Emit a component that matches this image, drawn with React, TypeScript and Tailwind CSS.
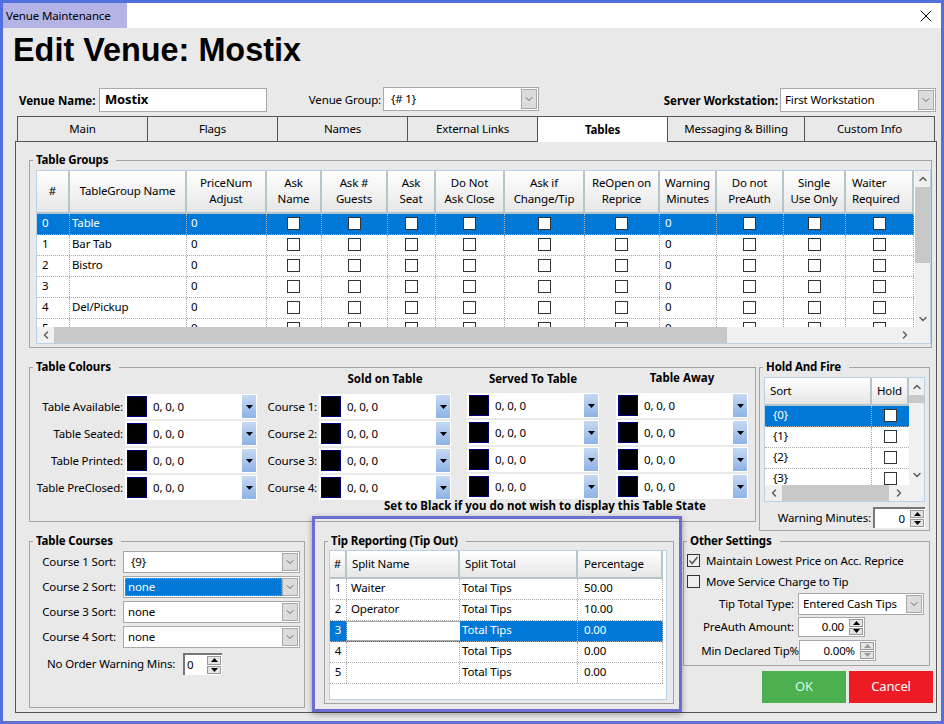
import type { ReactNode } from "react";
import { ChevronDown, ChevronLeft, ChevronRight, ChevronUp, X } from "lucide-react";

const groupCols = "grid grid-cols-[33px_117px_80px_55px_66px_48px_69px_80px_75px_57px_67px_62px_68px]";
const tipCols = "grid grid-cols-[17px_113px_118px_85px]";
const holdCols = "grid grid-cols-[107px_37px]";
const headCell = "flex items-center bg-gradient-to-b from-white to-[#e6e6e6] border-r-2 border-b-2 border-[#b4c6ca]";
const rowBase = "h-[21px] border-b border-dotted border-[#aaa] [&>div]:pb-[2px]";

const groupHeaders = [
    ["#"], ["TableGroup Name"], ["PriceNum", "Adjust"], ["Ask", "Name"], ["Ask #", "Guests"], ["Ask", "Seat"],
    ["Do Not", "Ask Close"], ["Ask if", "Change/Tip"], ["ReOpen on", "Reprice"], ["Warning", "Minutes"],
    ["Do not", "PreAuth"], ["Single", "Use Only"], ["Waiter", "Required"],
];
const groupNames = ["Table", "Bar Tab", "Bistro", "", "Del/Pickup", ""];
const tabs = [
    { name: "Main", width: "w-[130px]" },
    { name: "Flags", width: "w-[130px]" },
    { name: "Names", width: "w-[130px]" },
    { name: "External Links", width: "w-[130px]" },
    { name: "Tables", width: "w-[130px]", active: true },
    { name: "Messaging & Billing", width: "w-[137px]" },
    { name: "Custom Info", width: "w-[131px]" },
];
const tipRows = [
    { name: "Waiter", pct: "50.00" },
    { name: "Operator", pct: "10.00" },
    { name: "", pct: "0.00", selected: true },
    { name: "", pct: "0.00" },
    { name: "", pct: "0.00" },
];

function Group({ title, className, children }: { title: string; className: string; children: ReactNode }) {
    return (
        <fieldset className={`border border-[#a4a4a4] min-w-0 shrink-0 ${className}`}>
            <legend className="ml-[3px] pl-[3px] pr-[8px] font-bold leading-[16px]">{title}</legend>
            {children}
        </fieldset>
    );
}

function Check({ checked, muted }: { checked?: boolean; muted?: boolean }) {
    return (
        <span className={`w-[13px] h-[13px] shrink-0 border border-[#333] flex items-center justify-center ${muted ? "bg-[#eeeeee]" : "bg-white"}`}>
            {checked && (
                <svg width="11" height="11" viewBox="0 0 11 11">
                    <path d="M1.5 5.5 L4.2 8.5 L9.5 2" fill="none" stroke="#555" strokeWidth="1.5" />
                </svg>
            )}
        </span>
    );
}

function Select({ value, className, selected, indent }: { value: string; className: string; selected?: boolean; indent?: boolean }) {
    return (
        <div className={`flex items-center bg-white border border-[#a8a8a8] p-[1px] shrink-0 ${className}`}>
            <span className={`flex-1 h-full flex items-center min-w-0 whitespace-nowrap ${indent ? "pl-[6px]" : "pl-[3px]"} ${selected ? "bg-[#0078d7] text-white outline-1 outline-dotted outline-[#d98b2b] -outline-offset-1" : ""}`}>
                {value}
            </span>
            <span className="w-[16px] h-full bg-[#dcdcdc] border border-[#a8a8a8] flex items-center justify-center">
                <ChevronDown size={12} strokeWidth={1.4} color="#333" />
            </span>
        </div>
    );
}

function Triangle({ up, color = "#000" }: { up?: boolean; color?: string }) {
    return (
        <svg width="7" height="4" viewBox="0 0 7 4">
            <polygon points={up ? "3.5,0 7,4 0,4" : "0,0 7,0 3.5,4"} fill={color} />
        </svg>
    );
}

function Spinner({ value, className, disabled, sunken, left }: { value: string; className: string; disabled?: boolean; sunken?: boolean; left?: boolean }) {
    const border = sunken ? "border-2 border-r-0 border-b-0 border-[#777]" : "border border-[#a8a8a8]";
    const arrow = disabled ? "#999" : "#000";
    return (
        <div className={`flex bg-white shrink-0 ${border} ${className}`}>
            <span className={`flex-1 flex items-center ${left ? "justify-start pl-[2px]" : "justify-end pr-[4px]"}`}>{value}</span>
            <span className="w-[16px] flex flex-col gap-[1px] p-[1px]">
                <span className="flex-1 bg-[#e4e4e4] border border-[#999] flex items-center justify-center"><Triangle up color={arrow} /></span>
                <span className="flex-1 bg-[#e4e4e4] border border-[#999] flex items-center justify-center"><Triangle color={arrow} /></span>
            </span>
        </div>
    );
}

function ColourPicker() {
    return (
        <div className="flex items-center w-[132px] h-[25px] bg-white pl-[2px] pr-[1px] shrink-0">
            <span className="w-[20px] h-[21px] bg-black border border-[#000080]" />
            <span className="ml-[6px] flex-1">0, 0, 0</span>
            <span className="w-[14px] h-[23px] bg-gradient-to-b from-[#c6d9f1] to-[#8db2e6] flex flex-col items-center justify-center">
                <Triangle />
            </span>
        </div>
    );
}

function ColourColumn({ title, titleClass, labels, className }: { title?: string; titleClass?: string; labels: string[]; className: string }) {
    return (
        <div className={`flex flex-col shrink-0 ${className}`}>
            {title && <div className={`self-end w-[132px] font-bold tracking-normal text-center leading-[16px] whitespace-nowrap ${titleClass}`}>{title}</div>}
            <div className="flex flex-col gap-[2px]">
                {labels.map((label, i) => (
                    <div className="flex items-center justify-end gap-[2px]" key={i}>
                        {label && <span className="whitespace-nowrap">{label}</span>}
                        <ColourPicker />
                    </div>
                ))}
            </div>
        </div>
    );
}

function Scroll({ vertical, children }: { vertical?: boolean; children: ReactNode }) {
    return <div className={`bg-[#f0f0f0] flex shrink-0 ${vertical ? "flex-col w-[15px]" : "h-[16px]"}`}>{children}</div>;
}

function Arrow({ children, className }: { children: ReactNode; className: string }) {
    return <span className={`flex items-center justify-center shrink-0 ${className}`}>{children}</span>;
}

const arrowProps = { size: 12, strokeWidth: 3, color: "#606060" };

function TableGroups() {
    return (
        <div className="ml-[6px] mt-[2px] w-[895px] h-[174px] border border-[#b9d1e6] bg-white flex flex-col">
            <div className="flex h-[156px]">
                <div className="w-[877px] overflow-hidden">
                    <div className={`${groupCols} h-[43px]`}>
                        {groupHeaders.map((lines, i) => (
                            <div className={`${headCell} leading-[16px] pb-[2px] flex-col justify-center ${i === 12 ? "items-start pl-[6px]" : ""}`} key={lines[0]}>
                                {lines.map(line => <span className="whitespace-nowrap" key={line}>{line}</span>)}
                            </div>
                        ))}
                    </div>
                    {groupNames.map((name, row) => (
                        <div className={`${groupCols} ${rowBase} ${row === 0 ? "bg-[#0078d7] text-white" : ""}`} key={row}>
                            <div className="pl-[5px] flex items-center border-r border-dotted border-[#aaa]">{row}</div>
                            <div className="pl-[2px] flex items-center border-r border-dotted border-[#aaa]">{name}</div>
                            <div className="pl-[4px] flex items-center border-r border-dotted border-[#aaa]">0</div>
                            {groupHeaders.slice(3).map((lines, col) => (
                                lines[0] === "Warning"
                                    ? <div className="pl-[5px] flex items-center border-r border-dotted border-[#aaa]" key={col}>0</div>
                                    : <div className="pr-[1px] flex items-center justify-center border-r border-dotted border-[#aaa]" key={col}><Check /></div>
                            ))}
                        </div>
                    ))}
                </div>
                <div className="w-[1px]" />
                <Scroll vertical>
                    <Arrow className="h-[16px]"><ChevronUp {...arrowProps} /></Arrow>
                    <div className="h-[76px] bg-[#c8c8c8]" />
                    <div className="flex-1" />
                    <Arrow className="h-[16px]"><ChevronDown {...arrowProps} /></Arrow>
                </Scroll>
            </div>
            <Scroll>
                <Arrow className="w-[17px]"><ChevronLeft {...arrowProps} /></Arrow>
                <div className="w-[673px] bg-[#c8c8c8]" />
                <div className="w-[186px] flex justify-end">
                    <Arrow className="w-[16px]"><ChevronRight {...arrowProps} /></Arrow>
                </div>
            </Scroll>
        </div>
    );
}

function HoldAndFire() {
    return (
        <div className="ml-[4px] mt-[2px] w-[161px] h-[125px] border border-[#b9d1e6] bg-white flex">
            <div className="w-[144px] flex flex-col">
                <div className="h-[108px] overflow-hidden">
                    <div className={`${holdCols} h-[28px]`}>
                        <div className={`${headCell} pl-[5px]`}>Sort</div>
                        <div className={`${headCell} pl-[5px]`}>Hold</div>
                    </div>
                    {["{0}", "{1}", "{2}", "{3}", "{4}"].map((sort, i) => (
                        <div className={`${holdCols} ${rowBase} ${i === 0 ? "bg-[#0078d7] text-white" : ""}`} key={sort}>
                            <div className="pl-[8px] flex items-center border-r border-dotted border-[#aaa]">{sort}</div>
                            <div className="flex items-center justify-center"><Check /></div>
                        </div>
                    ))}
                </div>
                <Scroll>
                    <Arrow className="w-[17px]"><ChevronLeft {...arrowProps} /></Arrow>
                    <div className="w-[107px] bg-[#c8c8c8]" />
                    <Arrow className="w-[20px]"><ChevronRight {...arrowProps} /></Arrow>
                </Scroll>
            </div>
            <div className="w-[1px]" />
            <Scroll vertical>
                <Arrow className="h-[17px]"><ChevronUp {...arrowProps} /></Arrow>
                <div className="h-[8px] bg-[#c8c8c8]" />
                <div className="flex-1" />
                <Arrow className="h-[16px]"><ChevronDown {...arrowProps} /></Arrow>
                <div className="h-[18px]" />
            </Scroll>
        </div>
    );
}

function TipTable() {
    return (
        <div className="ml-[4px] mt-[1px] w-[338px] h-[150px] border border-[#b9d1e6] bg-white">
            <div className={`${tipCols} h-[28px] w-[333px]`}>
                <div className={`${headCell} justify-center`}>#</div>
                <div className={`${headCell} pl-[5px]`}>Split Name</div>
                <div className={`${headCell} pl-[5px]`}>Split Total</div>
                <div className={`${headCell} pl-[6px]`}>Percentage</div>
            </div>
            {tipRows.map((row, i) => (
                <div className={`${tipCols} ${rowBase} w-[333px] ${row.selected ? "bg-[#0078d7] text-white" : ""}`} key={i}>
                    <div className="flex items-center justify-center border-r border-dotted border-[#aaa]">{i + 1}</div>
                    <div className={`pl-[4px] flex items-center ${row.selected ? "bg-white border-y border-[#aaa]" : "border-r border-dotted border-[#aaa]"}`}>{row.name}</div>
                    <div className="pl-[2px] flex items-center border-r border-dotted border-[#aaa]">Total Tips</div>
                    <div className="pl-[6px] flex items-center border-r border-dotted border-[#aaa]">{row.pct}</div>
                </div>
            ))}
        </div>
    );
}

export default function App() {
    return (
        <div className="w-[944px] h-[724px] overflow-hidden border-[3px] border-[#5170dc] border-b-[#5f6fd2] bg-[#e9e9e9] text-black text-[11.5px] tracking-[-0.15px] font-['Noto_Sans',sans-serif]">
            <div className="h-[25px] bg-white flex items-center justify-between">
                <div className="w-[124px] h-full bg-[#b3b3e6] flex items-center pl-[3px] whitespace-nowrap">Venue Maintenance</div>
                <X size={20} strokeWidth={1.2} className="mr-[5px]" />
            </div>
            <h1 className="h-[59px] pl-[10px] pt-[4px] text-[32.4px] leading-[36px] tracking-normal font-bold font-['Liberation_Sans',sans-serif]">Edit Venue: Mostix</h1>

            <div className="flex items-start h-[25px]">
                <label className="ml-[16px] mt-[5px] w-[77px] font-bold tracking-normal whitespace-nowrap">Venue Name:</label>
                <div className="ml-[3px] mt-[1px] w-[168px] h-[24px] bg-white border border-[#a8a8a8] pl-[5px] flex items-center font-bold text-[13px]">Mostix</div>
                <label className="mt-[4px] w-[114px] text-right whitespace-nowrap">Venue Group:</label>
                <Select value="{# 1}" indent className="ml-[2px] w-[156px] h-[24px]" />
                <label className="mt-[5px] w-[239px] text-right font-bold tracking-normal whitespace-nowrap">Server Workstation:</label>
                <Select value="First Workstation" className="ml-[2px] mt-[1px] w-[156px] h-[24px]" />
            </div>

            <div className="mt-[4px] ml-[14px] flex h-[25px]">
                {tabs.map(tab => (
                    <div className={`${tab.width} border-t border-l border-[#555] flex items-center justify-center ${tab.active ? "relative z-10 h-[26px] bg-white font-bold" : "h-[25px]"} ${tab.name === "Custom Info" ? "border-r" : ""}`} key={tab.name}>
                        {tab.name}
                    </div>
                ))}
            </div>

            <div className="relative ml-[12px] w-[922px] h-[572px] border border-[#555]">
                <div className="mt-[10px] ml-[13px] w-[903px]">
                    <Group title="Table Groups" className="w-[903px] h-[196px]">
                        <TableGroups />
                    </Group>
                </div>

                <div className="mt-[11px] ml-[13px] flex items-start h-[172px]">
                    <Group title="Table Colours" className="w-[727px] h-[163px]">
                        <div className="flex items-start -mt-[4px] h-[127px]">
                            <ColourColumn labels={["Table Available:", "Table Seated:", "Table Printed:", "Table PreClosed:"]} className="w-[227px] mt-[23px]" />
                            <ColourColumn title="Sold on Table" titleClass="h-[23px]" labels={["Course 1:", "Course 2:", "Course 3:", "Course 4:"]} className="ml-[11px] w-[183px]" />
                            <ColourColumn title="Served To Table" titleClass="h-[22px]" labels={["", "", "", ""]} className="ml-[16px] w-[132px]" />
                            <ColourColumn title="Table Away" titleClass="h-[23px]" labels={["", "", "", ""]} className="ml-[17px] w-[132px] -mt-[1px]" />
                        </div>
                        <div className="ml-[354px] font-bold tracking-normal leading-[16px] whitespace-nowrap">Set to Black if you do not wish to display this Table State</div>
                    </Group>
                    <Group title="Hold And Fire" className="ml-[3px] w-[171px] h-[172px]">
                        <HoldAndFire />
                        <div className="flex items-center justify-end mt-[5px] mr-[4px] gap-[2px]">
                            <span className="whitespace-nowrap">Warning Minutes:</span>
                            <Spinner value="0" sunken className="w-[52px] h-[21px]" />
                        </div>
                    </Group>
                </div>

                <div className="mt-[2px] ml-[13px] flex items-start">
                    <Group title="Table Courses" className="w-[276px] h-[175px]">
                        <div className="flex flex-col gap-[3px] mt-[2px]">
                            {[
                                { label: "Course 1 Sort:", value: "{9}", indent: true },
                                { label: "Course 2 Sort:", value: "none", selected: true },
                                { label: "Course 3 Sort:", value: "none" },
                                { label: "Course 4 Sort:", value: "none" },
                            ].map(row => (
                                <div className="flex items-center" key={row.label}>
                                    <span className="w-[86px] whitespace-nowrap mr-[7px] shrink-0 flex justify-end">{row.label}</span>
                                    <Select value={row.value} selected={row.selected} indent={row.indent} className="w-[177px] h-[22px]" />
                                </div>
                            ))}
                            <div className="flex items-center mt-[2px]">
                                <span className="ml-[17px] w-[128px] whitespace-nowrap">No Order Warning Mins:</span>
                                <Spinner value="0" sunken left className="ml-[8px] w-[39px] h-[22px]" />
                            </div>
                        </div>
                    </Group>
                    <Group title="Tip Reporting (Tip Out)" className="ml-[19px] w-[350px] h-[171px]">
                        <TipTable />
                    </Group>
                    <div className="ml-[9px] w-[250px] shrink-0">
                        <Group title="Other Settings" className="w-[247px] h-[133px]">
                            <div className="pl-[3px] pt-[5px] flex flex-col">
                                <div className="flex items-center gap-[6px] h-[13px] whitespace-nowrap"><Check checked muted />Maintain Lowest Price on Acc. Reprice</div>
                                <div className="flex items-center gap-[6px] h-[13px] mt-[8px] whitespace-nowrap"><Check muted />Move Service Charge to Tip</div>
                            </div>
                            <div className="flex items-center mt-[5px]">
                                <span className="w-[110px] text-right whitespace-nowrap shrink-0">Tip Total Type:</span>
                                <Select value="Entered Cash Tips" className="ml-[4px] w-[126px] h-[22px]" />
                            </div>
                            <div className="flex items-center mt-[2px]">
                                <span className="w-[110px] text-right whitespace-nowrap shrink-0">PreAuth Amount:</span>
                                <Spinner value="0.00" className="ml-[4px] w-[67px] h-[20px]" />
                            </div>
                            <div className="flex items-center mt-[3px]">
                                <span className="w-[115px] text-right whitespace-nowrap shrink-0">Min Declared Tip%</span>
                                <Spinner value="0.00%" disabled className="w-[77px] h-[21px]" />
                            </div>
                        </Group>
                        <div className="mt-[5px] flex justify-end gap-[3px] text-[13px]">
                            <button className="w-[84px] h-[32px] bg-[#4caf50] text-[#d8f5e0]">OK</button>
                            <button className="w-[84px] h-[32px] bg-[#ed1c24] text-white">Cancel</button>
                        </div>
                    </div>
                </div>

                <div className="absolute left-[296px] top-[374px] w-[370px] h-[196px] border-[3px] border-[#6a6fcf] shadow-[0_2px_6px_rgba(0,0,0,0.35)] pointer-events-none" />
            </div>
        </div>
    );
}
